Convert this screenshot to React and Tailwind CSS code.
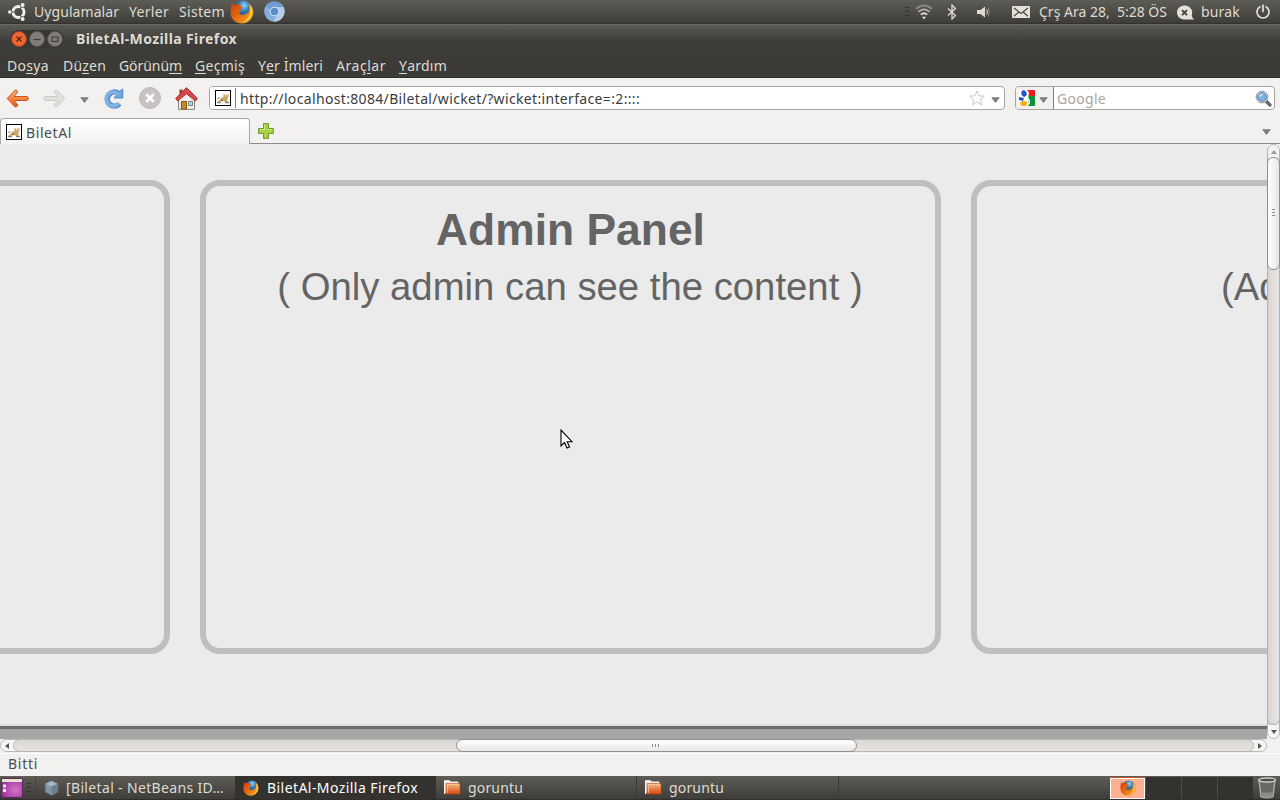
import React, { useLayoutEffect, useRef, useState } from "react";

// Text run spread evenly to the given width.
function Fit({ w, className = "", children }) {
  const ref = useRef(null);
  const [gap, setGap] = useState(0);
  useLayoutEffect(() => {
    const n = ref.current.textContent.length;
    setGap((w - ref.current.getBoundingClientRect().width) / n);
  }, []);
  return (
    <span className={"block shrink-0 whitespace-pre " + className} style={{ width: w }}>
      <span ref={ref} style={{ letterSpacing: gap }}>{children}</span>
    </span>
  );
}

const U = ({ children }) => (
  <span className="border-b border-[#dfdbd2] inline-block leading-[15px]">{children}</span>
);

const Firefox = ({ className }) => (
  <svg viewBox="0 0 24 24" className={"shrink-0 " + className}>
    <defs>
      <radialGradient id="ffg" cx=".55" cy=".25" r=".7">
        <stop offset="0" stopColor="#8fd4f2" />
        <stop offset=".45" stopColor="#2a74b8" />
        <stop offset="1" stopColor="#143a78" />
      </radialGradient>
      <linearGradient id="ffo" x1="0" y1="0" x2="1" y2="1">
        <stop offset="0" stopColor="#c93c0c" />
        <stop offset=".55" stopColor="#ea7412" />
        <stop offset="1" stopColor="#f9b52a" />
      </linearGradient>
    </defs>
    <circle cx="13" cy="10.5" r="9.9" fill="url(#ffg)" />
    <path d="M2 3 4.300 5.200Q5.800 4.300 8 4.500C9 3.200 10 2.700 11 2.700c-1 1-1.200 2.100-.8 3 1 .7 2.400 1 2.800 1.600-.4 1.200-2.200 1.500-2.700 2.300-.2 1.200.1 1.800.7 2.300-1.400.4-1.800.2-2.200.5.8 2 2.600 2.800 4.500 2.400 2.600-.4 4.900-1.600 5.700-4 .6-2.500.3-5.200-.8-7.800 3.500 2 5.400 6 5.100 9.800C22.800 19 18 23.500 12 23.500 5.500 23.500.5 18.600.5 12.200.5 9 1 6 2 3z" fill="url(#ffo)" />
    <path d="M19.500 4.500c2.700 2.600 3.700 5.500 2.900 9-1.100 4.600-4.500 7.700-8.900 8.600 4-2.300 6.300-5.800 6.600-9.500.3-3.300 0-5.800-.6-8.100z" fill="#fbcf3f" />
  </svg>
);

const Chromium = () => (
  <svg viewBox="0 0 20 20" className="ml-[10px] h-[21px] w-[21px] shrink-0">
    <circle cx="10" cy="10" r="9.600" fill="#a4c4e8" />
    <path d="M1.800 5A9.600 9.600 0 0 1 18.600 6H10a4.200 4.200 0 0 0-4 3z" fill="#6f9dd3" />
    <path d="M1.800 5A9.600 9.600 0 0 0 9 19.600l3.500-6A4.200 4.200 0 0 1 6 11z" fill="#85aedd" />
    <path d="M18.600 6H12a4.500 4.500 0 0 1 1 7.200L9 19.600A9.600 9.600 0 0 0 18.600 6z" fill="#b3cdea" />
    <circle cx="10" cy="10" r="4.500" fill="#d3e2f4" />
    <circle cx="10" cy="10" r="3.600" fill="#5a8ccb" />
  </svg>
);

const Cat = () => (
  <svg viewBox="0 0 16 16" className="h-4 w-4 shrink-0">
    <rect x=".5" y=".5" width="15" height="15" fill="#fff" stroke="#000" />
    <path d="M2 12.500l1-1.500 2-1.500 1.500-2 2-.5V3.500l1.500 1.300h2L13.800 3.500l-.3 3.500-1.200 2 .5 2.500 1 1h-3l-2-1.500-3 .5-2 1z" fill="#cda765" />
    <path d="M2 12.700h4M10 12.700h4M2.500 8.500l2-.8M6 10l2 .5" stroke="#51452f" strokeWidth=".8" />
    <path d="M10 6h.8M12 6h.8" stroke="#fff" />
  </svg>
);

const Tri = ({ className = "", c = "#858585" }) => (
  <svg viewBox="0 0 9 6" className={"h-[6px] w-[9px] shrink-0 " + className}>
    <path d="M.8.700h7.400L4.500 5.400z" fill={c} stroke="#666" strokeWidth=".7" />
  </svg>
);

const Folder = ({ className }) => (
  <svg viewBox="0 0 17 15" className={"h-[15px] w-[17px] shrink-0 " + className}>
    <defs>
      <linearGradient id="fold" x1="0" y1="0" x2="0" y2="1">
        <stop offset="0" stopColor="#f5bd87" />
        <stop offset=".5" stopColor="#e88349" />
        <stop offset="1" stopColor="#cf4812" />
      </linearGradient>
    </defs>
    <path d="M.5 14V.7h5l1 1.300H14V5" fill="#eee" stroke="#f8f5f1" />
    <path d="M2 14V3.500h14V14z" fill="url(#fold)" stroke="#c34512" strokeWidth=".6" />
    <path d="M3.500 13V4.500H15" fill="none" stroke="#f8cda4" strokeWidth=".7" />
  </svg>
);

const Winbtn = ({ kind }) => (
  <svg viewBox="0 0 16 16" className="h-4 w-4 shrink-0">
    <circle cx="8" cy="8" r="7.400" fill={kind === "x" ? "#ee6534" : "#807e76"} stroke={kind === "x" ? "#b8431a" : "#5b5a53"} strokeWidth=".7" />
    {kind === "x" && <path d="M5.500 5.500l5 5M10.500 5.500l-5 5" stroke="#4b2314" strokeWidth="1.100" />}
    {kind === "-" && <path d="M4.500 8.500h7" stroke="#3c3b37" strokeWidth="1.200" />}
    {kind === "o" && <rect x="5" y="6" width="6" height="4.500" fill="none" stroke="#3c3b37" strokeWidth="1.100" />}
  </svg>
);

const Grip = ({ className }) => (
  <div className={"flex h-[9px] w-[4px] shrink-0 flex-col justify-between " + className}>
    <div className="h-px bg-[#33322e]" />
    <div className="h-px bg-[#33322e]" />
    <div className="h-px bg-[#33322e]" />
  </div>
);

function Panel() {
  return (
    <div className="flex h-6 items-center border-b border-[#33322e] bg-linear-to-b from-[#5d5c55] to-[#3e3d39] text-[14px] leading-6 text-[#dfdbd2]">
      <svg viewBox="0 0 18 18" className="ml-2 h-[18px] w-[18px] shrink-0">
        <circle cx="10.500" cy="9" r="5.500" fill="none" stroke="#f2f0eb" strokeWidth="3" />
        <path d="M10.500 9L3 9M10.500 9l4-7M10.500 9l4 7" stroke="#504f49" strokeWidth="1" />
        <circle cx="2" cy="9" r="2.400" fill="#504f49" />
        <circle cx="14.500" cy="2.200" r="2.500" fill="#55544d" />
        <circle cx="14.500" cy="15.800" r="2.500" fill="#474640" />
        <circle cx="1.800" cy="9" r="1.800" fill="#f2f0eb" />
        <circle cx="14.600" cy="2" r="2" fill="#f2f0eb" />
        <circle cx="14.600" cy="16" r="2" fill="#f2f0eb" />
      </svg>
      <Fit w={85} className="ml-2">Uygulamalar</Fit>
      <Fit w={40} className="ml-[10px]">Yerler</Fit>
      <Fit w={46} className="ml-[10px]">Sistem</Fit>
      <Firefox className="ml-[5px] h-[24px] w-[24px]" />
      <Chromium />
      <Grip className="ml-[620px]" />
      <svg viewBox="0 0 18 16" className="ml-[6px] h-4 w-[18px] shrink-0" fill="none" strokeWidth="1.800">
        <path d="M1 5Q9-2 17 5" stroke="#8d8a82" />
        <path d="M3.500 7.800Q9 3 14.500 7.800" stroke="#b9b5aa" />
        <path d="M5.800 10.600Q9 8 12.200 10.600" stroke="#dfdbd2" />
        <path d="M7 12.800h4L9 15.500z" fill="#dfdbd2" stroke="none" />
      </svg>
      <svg viewBox="0 0 10 16" className="ml-[14px] h-4 w-[10px] shrink-0" fill="none" stroke="#dfdbd2" strokeWidth="1.300">
        <path d="M1 4.500l7.500 7L5 15V1l3.500 3.500L1 11.500" />
      </svg>
      <svg viewBox="0 0 14 12" className="ml-[20px] h-3 w-[14px] shrink-0">
        <path d="M0 4h3.500L8 .5v11L3.500 8H0z" fill="#dfdbd2" />
        <path d="M9.700 3.500q1.500 2.500 0 5" fill="none" stroke="#dfdbd2" />
        <path d="M11.300 1.700q2 4.300 0 8.600" fill="none" stroke="#8d8a82" />
      </svg>
      <svg viewBox="0 0 18 12" className="ml-[21px] h-3 w-[18px] shrink-0">
        <rect width="18" height="12" rx=".8" fill="#e6e1d8" />
        <path d="M2 2l7 5.500L16 2M2 10.300l4.500-4M16 10.300l-4.500-4" fill="none" stroke="#45443f" strokeWidth="1.200" />
      </svg>
      <Fit w={128} className="ml-[9px]">{"Çrş Ara 28,  5:28 ÖS"}</Fit>
      <svg viewBox="0 0 18 14" className="ml-[10px] mt-px h-[15px] w-[18px] shrink-0">
        <path d="M7.500 0C3.400 0 0 3 0 7s3.400 7 7.500 7H17.500q-2.500-1.400-2.800-4c.3-.8.5-1.800.5-3C15.200 3 11.700 0 7.500 0z" fill="#e6e1d8" />
        <path d="M5 4.700l5 5M10 4.700l-5 5" stroke="#45443f" strokeWidth="1.900" />
      </svg>
      <Fit w={39} className="ml-[6px]">burak</Fit>
      <svg viewBox="0 0 14 15" className="ml-[16px] h-[15px] w-[14px] shrink-0" fill="none" stroke="#e6e1d8" strokeWidth="1.700" strokeLinecap="round">
        <path d="M4 2.800a6 6 0 1 0 6 0M7 1v6.500" />
      </svg>
    </div>
  );
}

function TitleAndMenu() {
  return (
    <div className="bg-[#3c3b37] text-[#dfdbd2]">
      <div className="flex h-[29px] items-center border-t border-[#6b6962] bg-linear-to-b from-[#5a5952] to-[#3d3c38] to-60% pb-px">
        <div className="ml-[10px] flex h-[18px] items-center gap-[2px] rounded-full bg-[#383732] px-px">
          <Winbtn kind="x" />
          <Winbtn kind="-" />
          <Winbtn kind="o" />
        </div>
        <Fit w={161} className="ml-[12px] text-[14px] leading-[20px] font-bold">BiletAl-Mozilla Firefox</Fit>
      </div>
      <div className="flex h-[25px] border-b border-[#302f2c] text-[14px] leading-[25px]">
        <Fit w={42} className="ml-[7px]">Do<U>s</U>ya</Fit>
        <Fit w={43} className="ml-[14px]">Dü<U>z</U>en</Fit>
        <Fit w={63} className="ml-[13px]">Görünü<U>m</U></Fit>
        <Fit w={50} className="ml-[13px]"><U>G</U>eçmiş</Fit>
        <Fit w={65} className="ml-[13px]">Y<U>e</U>r İmleri</Fit>
        <Fit w={50} className="ml-[13px]">Araç<U>l</U>ar</Fit>
        <Fit w={48} className="ml-[13px]"><U>Y</U>ardım</Fit>
      </div>
    </div>
  );
}

function Toolbar() {
  return (
    <div className="flex h-10 items-center bg-[#f2f1ef] text-[14px] text-[#3c3c3c]">
      <svg viewBox="0 0 23 19" className="ml-[6px] h-[19px] w-[23px] shrink-0">
        <defs>
          <linearGradient id="bk" x1="0" y1="0" x2="0" y2="1">
            <stop offset="0" stopColor="#f8b679" />
            <stop offset="1" stopColor="#e4590e" />
          </linearGradient>
        </defs>
        <path d="M9.200 1L1.200 9.500l8 8.500q2 .3 2.600-2L8.100 11.500H21q1.300-.5 1.300-2T21 7.500H8.100l3.700-4.500Q11.500 1 9.200 1z" fill="url(#bk)" stroke="#d4551b" strokeLinejoin="round" />
      </svg>
      <svg viewBox="0 0 23 19" className="ml-[14px] h-[19px] w-[23px] shrink-0">
        <path d="M13.800 1l8 8.500-8 8.500q-2 .3-2.600-2l3.700-4.500H2Q.7 11 .7 9.500T2 7.500h12.900l-3.700-4.500q.3-2 2.600-2z" fill="#e2e0dd" stroke="#cecbc8" strokeLinejoin="round" />
      </svg>
      <Tri className="ml-[14px] mt-[3px]" />
      <svg viewBox="0 0 20 21" className="ml-[15px] h-[21px] w-5 shrink-0">
        <path d="M15.500 15.700A7 7 0 1 1 14.500 5.500" fill="none" stroke="#4f8ccc" strokeWidth="5.400" />
        <path d="M18.800 1v9H10l2.500-3 3.300-4z" fill="#72a7dc" stroke="#4f8ccc" strokeLinejoin="round" />
        <path d="M15 15.300A7 7 0 1 1 14.500 6.200" fill="none" stroke="#83b3e3" strokeWidth="3.500" />
      </svg>
      <svg viewBox="0 0 22 22" className="ml-[15px] h-[22px] w-[22px] shrink-0">
        <circle cx="11" cy="11" r="10.500" fill="#c7c3c2" stroke="#bbb7b5" />
        <path d="M7.300 7.300l7.400 7.400M14.700 7.300l-7.400 7.400" stroke="#fff" strokeWidth="2.700" />
      </svg>
      <svg viewBox="0 0 23 23" className="ml-[14px] h-[23px] w-[23px] shrink-0">
        <path d="M3.500 11v11.400h16V11L11.500 3z" fill="#eeeeec" stroke="#83817c" />
        <path d="M4.500 2.500h3v6h-3z" fill="#a33" />
        <path d="M11.500.6L.7 11.500l1.900 2.500 8.900-7.300 8.900 7.300 1.900-2.500z" fill="#d9474b" stroke="#ad2f33" strokeLinejoin="round" />
        <path d="M6.500 14.500h5V22h-5z" fill="#c58a22" stroke="#8c5a0d" />
        <path d="M13.500 14.500h4v4h-4z" fill="#b8d0e0" stroke="#77828a" />
      </svg>
      <div className="ml-[11px] flex h-6 w-[796px] shrink-0 items-center rounded-[4px] border border-[#a8a5a1] bg-white">
        <div className="flex h-full w-[26px] shrink-0 items-center rounded-l-[3px] bg-white pl-[5px]">
          <Cat />
          <div className="ml-[4px] h-5 w-px bg-[#807e7b]" />
        </div>
        <Fit w={400} className="ml-[4px] mt-[2px] leading-[22px]">http://localhost:8084/Biletal/wicket/?wicket:interface=:2::::</Fit>
        <svg viewBox="0 0 16 16" className="ml-[329px] h-4 w-4 shrink-0">
          <path d="M8 1l2 4.800 5.300.4-4 3.500 1.300 5.200L8 12l-4.600 2.900 1.300-5.200-4-3.500L6 5.800z" fill="#fff" stroke="#c9c9c9" />
        </svg>
        <Tri className="ml-[6px] mt-[3px]" />
      </div>
      <div className="ml-[10px] flex h-6 w-[260px] shrink-0 items-center rounded-[4px] border border-[#a8a5a1] bg-white">
        <div className="flex h-full w-[38px] shrink-0 items-center rounded-l-[3px] border-r border-[#807e7b] bg-[#f2f1ef] pl-[3px]">
          <svg viewBox="0 0 16 16" className="h-4 w-4 shrink-0">
            <rect width="16" height="16" rx="1" fill="#fff" />
            <path d="M8 0h7q1 0 1 1v5H9.500z" fill="#ee1c1c" />
            <path d="M9.500 6H16v9q0 1-1 1H9V9z" fill="#0b943d" />
            <path d="M0 7l5 1-1 3-4-1z" fill="#1f56c3" />
            <ellipse cx="5" cy="3.500" rx="2.600" ry="3.300" fill="#1f56c3" transform="rotate(-15 5 3.500)" />
            <ellipse cx="4.800" cy="13.500" rx="3.600" ry="2.500" fill="#f4ac16" />
            <path d="M8.300 1C11 4 7 6 8.500 8s3 5 0 7" fill="none" stroke="#fff" strokeWidth="1.500" />
          </svg>
          <Tri className="ml-[4px] mt-[3px]" />
        </div>
        <Fit w={49} className="ml-[3px] mt-[2px] leading-[22px] text-[#a9a5a1]">Google</Fit>
        <svg viewBox="0 0 17 17" className="ml-[149px] h-[17px] w-[17px] shrink-0">
          <path d="M11 11l4 4" stroke="#6a6a6a" strokeWidth="3.300" strokeLinecap="round" />
          <circle cx="7" cy="7" r="5.900" fill="#f4f4f4" stroke="#8d9090" />
          <circle cx="7" cy="7" r="4.300" fill="#82b1e4" stroke="#4379b7" />
          <path d="M4.500 6.500Q5 4.500 7.500 4.500" stroke="#dcebfa" fill="none" strokeWidth="1.400" />
        </svg>
      </div>
    </div>
  );
}

function Tabs() {
  return (
    <div className="flex h-[26px] bg-[#f2f1ef]">
      <div className="flex h-full w-[250px] items-center rounded-t-[4px] border border-b-0 border-[#aaa7a3] bg-linear-to-b from-white to-[#f3f3f2] pl-[5px] text-[14px] text-[#4c4c4c]">
        <Cat />
        <Fit w={46} className="ml-[4px] mt-[2px]">BiletAl</Fit>
      </div>
      <div className="flex flex-1 items-center border-b border-[#8f8d8a]">
        <svg viewBox="0 0 16 16" className="ml-[8px] h-4 w-4 shrink-0">
          <path d="M5.500.6h5v4.900h4.900v5h-4.900v4.900h-5v-4.900H.6v-5h4.900z" fill="#a7d042" stroke="#6f9b27" />
          <path d="M6.700 2v4.700H2M10 6.700h4" stroke="#d6ea8b" fill="none" />
        </svg>
        <Tri className="ml-[988px] mt-[3px]" />
      </div>
    </div>
  );
}

const card = "h-[474px] w-[741px] shrink-0 rounded-[20px] border-[6px] border-[#bfbfbf] font-['Liberation_Sans',sans-serif] text-[#646464]";

function Page() {
  return (
    <div className="flex h-[595px] w-[1267px] flex-col overflow-hidden bg-[#ebebeb]">
      <div className="mt-9 flex h-[543px] gap-[30px]">
        <div className={card + " -ml-[571px]"} />
        <div className={card + " text-center"}>
          <div className="mt-[19px] text-[44.400px] leading-[50px] font-bold">Admin Panel</div>
          <div className="mt-[10px] -ml-px text-[38.300px] leading-[44px] whitespace-nowrap">( Only admin can see the content )</div>
        </div>
        <div className={card}>
          <div className="mt-[79px] ml-[244px] text-[38.300px] leading-[44px] whitespace-nowrap">(Ad</div>
        </div>
      </div>
      <div className="h-[3px] bg-linear-to-b from-[#ebebeb] to-[#d5d7d5]" />
      <div className="h-[3px] bg-[#6b6d6b]" />
      <div className="h-[10px] bg-[#a6a6a6]" />
    </div>
  );
}

function VScroll() {
  return (
    <div className="flex h-[595px] w-[13px] flex-col rounded-full border border-[#b3afab] bg-linear-to-r from-[#d9d5d3] to-[#e8e6e4]">
      <div className="flex h-[13px] shrink-0 items-center justify-center rounded-t-full bg-[#f3f2f1]">
        <svg viewBox="0 0 6 4" className="h-1 w-[6px]"><path d="M0 4h6L3 0z" fill="#9b9894" /></svg>
      </div>
      <div className="-mx-px -mt-px flex h-[113px] shrink-0 flex-col items-center justify-center gap-[2px] rounded-[6px] border border-[#918e8a] bg-linear-to-r from-white to-[#e8e6e4] pb-[2px]">
        <div className="h-px w-[3px] bg-[#8e8b87]" />
        <div className="h-px w-[3px] bg-[#8e8b87]" />
        <div className="h-px w-[3px] bg-[#8e8b87]" />
      </div>
      <div className="-mx-px flex-1 rounded-b-full border border-t-0 border-[#b3afab]" />
      <div className="flex h-[13px] shrink-0 items-center justify-center rounded-b-full bg-[#f6f5f4]">
        <svg viewBox="0 0 6 4" className="h-1 w-[6px]"><path d="M0 0h6L3 4z" fill="#555" /></svg>
      </div>
    </div>
  );
}

function HScroll() {
  return (
    <div className="flex h-[14px] bg-[#f2f1ef]">
      <div className="flex h-[13px] w-[1267px] items-stretch rounded-full border border-[#bab6b2] bg-[#f6f5f4]">
        <div className="flex w-[12px] items-center justify-center">
          <svg viewBox="0 0 4 6" className="h-[6px] w-1"><path d="M4 0v6L0 3z" fill="#555" /></svg>
        </div>
        <div className="-my-px flex flex-1 rounded-full border border-[#bab6b2] bg-linear-to-b from-[#dbd7d5] to-[#e6e4e2]">
          <div className="-my-px ml-[442px] flex w-[401px] items-center justify-center gap-[2px] rounded-full border border-[#918e8a] bg-linear-to-b from-white to-[#e9e7e6] pr-[2px]">
            <div className="h-[3px] w-px bg-[#8e8b87]" />
            <div className="h-[3px] w-px bg-[#8e8b87]" />
            <div className="h-[3px] w-px bg-[#8e8b87]" />
          </div>
        </div>
        <div className="flex w-[12px] items-center justify-center">
          <svg viewBox="0 0 4 6" className="h-[6px] w-1"><path d="M0 0v6l4-3z" fill="#555" /></svg>
        </div>
      </div>
    </div>
  );
}

function Taskbar() {
  return (
    <div className="flex h-6 items-center border-b border-[#302f2c] bg-linear-to-b from-[#5d5c55] to-[#3e3d39] text-[14px] text-[#dfdbd2]">
      <svg viewBox="0 0 22 20" className="ml-[1px] h-5 w-[22px] shrink-0">
        <defs>
          <radialGradient id="desk" cx=".65" cy=".6" r=".7">
            <stop offset="0" stopColor="#d974c8" />
            <stop offset="1" stopColor="#94329a" />
          </radialGradient>
        </defs>
        <rect x=".5" y=".5" width="21" height="19" rx="1.500" fill="url(#desk)" stroke="#57275a" />
        <path d="M1 1h20v3H1z" fill="#e8e2cd" />
        <path d="M2 6.500h3v3H2zM2 11h3v3H2z" fill="#f5e9f4" />
      </svg>
      <Grip className="ml-[4px]" />
      <div className="ml-[4px] flex h-full w-[200px] shrink-0 items-center border-l border-[#45443f] pl-[8px]">
        <svg viewBox="0 0 15 16" className="h-4 w-[15px] shrink-0">
          <path d="M7.500.5l6.500 3v8.500l-6.500 3.500L1 12V3.500z" fill="#8296a5" stroke="#56646e" />
          <path d="M1.500 4l6 2.500L13.500 4 7.500 1z" fill="#a5b5bf" />
          <path d="M7.500 6.500L13.500 4v7.800l-6 3z" fill="#6b7f90" />
        </svg>
        <Fit w={158} className="ml-[7px]">[Biletal - NetBeans ID…</Fit>
      </div>
      <div className="flex h-full w-[201px] shrink-0 items-center bg-[#33322f] pl-[8px]">
        <Firefox className="h-4 w-4" />
        <Fit w={151} className="ml-[8px] text-white">BiletAl-Mozilla Firefox</Fit>
      </div>
      <div className="flex h-full w-[201px] shrink-0 items-center border-r border-[#3b3a36] pl-[8px]">
        <Folder />
        <Fit w={55} className="ml-[7px]">goruntu</Fit>
      </div>
      <div className="flex h-full w-[202px] shrink-0 items-center border-r border-[#3b3a36] pl-[8px]">
        <Folder />
        <Fit w={55} className="ml-[7px]">goruntu</Fit>
      </div>
      <div className="ml-[271px] flex h-[22px] shrink-0">
        <div className="w-[35px] border-t border-[#c8532a]">
          <div className="flex h-[21px] items-center justify-center border border-white bg-[#ffb091]">
            <Firefox className="h-4 w-4" />
          </div>
        </div>
        <div className="ml-px w-[36px] border-r border-[#4d4c47] bg-[#33322f]" />
        <div className="w-[36px] border-r border-[#4d4c47] bg-[#33322f]" />
        <div className="w-[35px] bg-[#33322f]" />
      </div>
      <svg viewBox="0 0 20 22" className="ml-[4px] h-[22px] w-5 shrink-0">
        <path d="M2 3l2 16.500q6 2.500 12 0L18 3z" fill="#686963" stroke="#aaa9a4" strokeWidth="1.500" />
        <path d="M4.500 15.500h11l-.5 4.300q-5 1.500-10 0z" fill="#8c8c88" />
        <ellipse cx="10" cy="3" rx="8.500" ry="2" fill="#4d4c47" stroke="#cbcbc8" strokeWidth="1.400" />
      </svg>
    </div>
  );
}

export default function App() {
  return (
    <div className="relative h-[800px] w-[1280px] overflow-hidden bg-[#f2f1ef] font-['Noto_Sans','Open_Sans',sans-serif]">
      <Panel />
      <TitleAndMenu />
      <Toolbar />
      <Tabs />
      <div className="flex">
        <Page />
        <VScroll />
      </div>
      <HScroll />
      <div className="h-[23px] border-t border-white pl-[8px] text-[14px] leading-[20px] text-[#4c4c4c]">
        <Fit w={30}>Bitti</Fit>
      </div>
      <Taskbar />
      <svg viewBox="0 0 13 21" className="absolute top-[429px] left-[560px] h-[21px] w-[13px]">
        <path d="M1 1v16l3.500-3.500L7 19l2.500-1-2.300-5.300H12z" fill="#fff" stroke="#000" strokeWidth="1.100" />
      </svg>
    </div>
  );
}
